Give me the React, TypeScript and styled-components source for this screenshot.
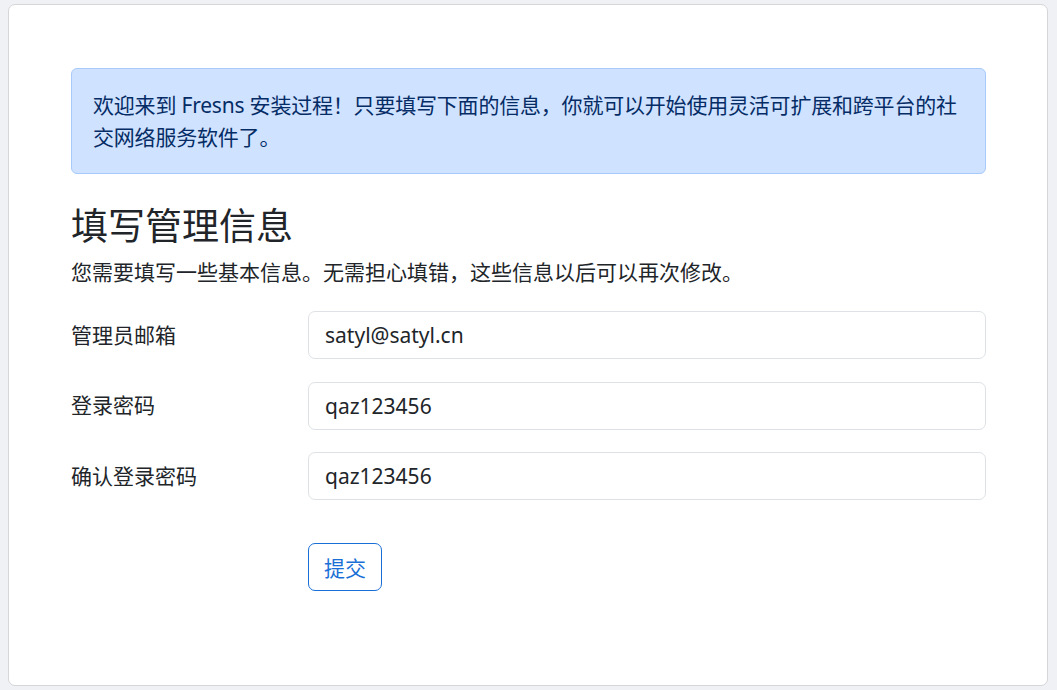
import React from "react";
import styled, { createGlobalStyle } from "styled-components";

const Global = createGlobalStyle`
  html, body { margin: 0; padding: 0; background: #f0f1f5; }
  body {
    font-family: "Noto Sans", "Noto Sans CJK SC", sans-serif;
    color: #212529;
    font-size: 21px;
  }
  * { box-sizing: border-box; }
`;

const Page = styled.div`
  padding: 4px 9px 4px 8px;
  height: 690px;
`;

const Card = styled.div`
  background: #fff;
  border: 1px solid #d6d6d9;
  border-radius: 7px;
  height: 682px;
  padding: 63px 61px 0 62px;
`;

const Alert = styled.div`
  background: #cfe2ff;
  border: 1px solid #a8cafa;
  border-radius: 6px;
  color: #052c65;
  padding: 20px 20px 20px 21px;
  line-height: 32px;
  font-size: 21px;
  letter-spacing: -0.2px;
`;

const Title = styled.h3`
  margin: 30px 0 9px;
  font-size: 37px;
  font-weight: 400;
  line-height: 44px;
  color: #212529;
`;

const Lead = styled.p`
  margin: 0 0 23px;
  font-size: 21px;
  line-height: 31px;
`;

const Form = styled.form`
  display: flex;
  flex-direction: column;
  gap: 22.5px;
`;

const Row = styled.div`
  display: grid;
  grid-template-columns: 237px 1fr;
  align-items: center;
`;

const Label = styled.label`
  font-size: 21px;
  line-height: 31px;
`;

const Input = styled.input`
  height: 48px;
  width: 100%;
  border: 1px solid #dee2e6;
  border-radius: 7px;
  padding: 0 16px;
  font-family: inherit;
  font-size: 21px;
  color: #212529;
  background: #fff;
  outline: none;
`;

const Actions = styled.div`
  display: grid;
  grid-template-columns: 237px 1fr;
  margin-top: 20px;
`;

const Button = styled.button`
  grid-column: 2;
  justify-self: start;
  height: 48px;
  padding: 0 15px;
  border: 1px solid #1a6fd6;
  border-radius: 7px;
  background: #fff;
  color: #1a6fd6;
  font-family: inherit;
  font-size: 21px;
  cursor: pointer;
`;

const fields = [
  { label: "管理员邮箱", value: "satyl@satyl.cn" },
  { label: "登录密码", value: "qaz123456" },
  { label: "确认登录密码", value: "qaz123456" },
];

export default function App() {
  return (
    <>
      <Global />
      <Page>
        <Card>
          <Alert>
            欢迎来到 Fresns 安装过程！只要填写下面的信息，你就可以开始使用灵活可扩展和跨平台的社交网络服务软件了。
          </Alert>
          <Title>填写管理信息</Title>
          <Lead>您需要填写一些基本信息。无需担心填错，这些信息以后可以再次修改。</Lead>
          <Form onSubmit={(e) => e.preventDefault()}>
            {fields.map((f) => (
              <Row key={f.label}>
                <Label>{f.label}</Label>
                <Input type="text" defaultValue={f.value} />
              </Row>
            ))}
            <Actions>
              <Button type="submit">提交</Button>
            </Actions>
          </Form>
        </Card>
      </Page>
    </>
  );
}
